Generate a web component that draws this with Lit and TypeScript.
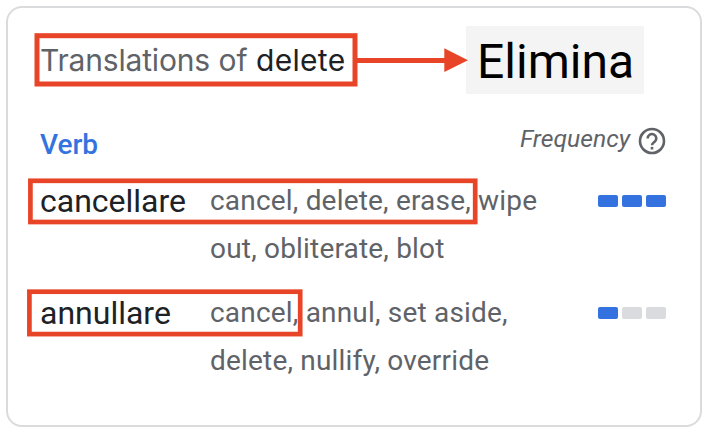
import { LitElement, html, css } from "lit";
import { customElement, property } from "lit/decorators.js";

@customElement("frequency-meter")
class FrequencyMeter extends LitElement {
  @property({ type: Number }) level = 0;
  static styles = css`
    :host { display: flex; gap: 4px; }
    .bar { width: 20px; height: 12px; border-radius: 2px; background: #dadbdf; }
    .on { background: #3473df; }
  `;
  render() {
    return html`${[1, 2, 3].map((n) => html`<span class="bar ${n <= this.level ? "on" : ""}"></span>`)}`;
  }
}

const entries = [
  { word: "cancellare", level: 3, lines: ["cancel, delete, erase, wipe", "out, obliterate, blot"] },
  { word: "annullare", level: 1, lines: ["cancel, annul, set aside,", "delete, nullify, override"] },
];

@customElement("app-root")
class AppRoot extends LitElement {
  static styles = css`
    :host {
      display: block; position: relative; box-sizing: border-box;
      width: 708px; height: 438px; padding: 6px; overflow: hidden;
      background: #fff; color: #5f6368;
      font-family: Roboto, sans-serif;
    }
    .card {
      box-sizing: border-box; width: 696px; height: 421px;
      border: 2px solid #dadbdd; border-radius: 16px;
      padding: 18px 34px 0 32px;
    }
    .head { display: flex; justify-content: space-between; height: 68px; }
    .title {
      margin: 0; font: 400 30px/68px Inter, sans-serif;
      letter-spacing: -0.18px; word-spacing: 0.4px; white-space: pre;
    }
    .title b { font-weight: 400; color: #202124; letter-spacing: 0.3px; }
    .result {
      box-sizing: border-box; width: 178px; height: 68px; margin-right: 22px;
      padding-left: 11px; background: #f4f4f4; color: #000;
      font-size: 48px; line-height: 71px; letter-spacing: 0;
    }
    .sub { display: flex; justify-content: space-between; height: 56px; margin-top: 21px; }
    .pos { margin-top: 6px; font-size: 28px; font-weight: 500; line-height: 48px; color: #3473df; }
    .freq { display: flex; align-items: flex-start; font-size: 24.7px; font-style: italic; line-height: 48px; gap: 8px; }
    .freq svg { margin-top: 12px; }
    .rows { display: grid; row-gap: 16px; margin-top: 5px; }
    .row { display: grid; grid-template-columns: 170px 1fr auto; height: 96px; }
    .word { font-size: 32px; line-height: 50px; color: #202124; }
    .means { margin-top: 1px; font-size: 28px; line-height: 48px; white-space: nowrap; letter-spacing: 0.19px; }
    frequency-meter { margin-top: 19px; }
    .marks { position: absolute; left: 0; top: 0; }
  `;
  render() {
    return html`
      <section class="card">
        <header class="head">
          <h1 class="title">Translations of <b>delete</b></h1>
          <div class="result">Elimina</div>
        </header>
        <div class="sub">
          <span class="pos">Verb</span>
          <span class="freq">Frequency
            <svg width="28" height="28" viewBox="0 0 28 28" fill="none" stroke="#5f6368" stroke-width="2.6">
              <circle cx="14" cy="14" r="12"></circle>
              <path d="M9.7 11.4a4.3 4.3 0 1 1 7.2 3.1c-1.7 1.4-2.9 1.9-2.9 3.7"></path>
              <path d="M14 19.9v2.6"></path>
            </svg>
          </span>
        </div>
        <div class="rows">
          ${entries.map((e) => html`
            <div class="row">
              <span class="word">${e.word}</span>
              <div class="means">${e.lines.map((l) => html`<div>${l}</div>`)}</div>
              <frequency-meter .level=${e.level}></frequency-meter>
            </div>`)}
        </div>
      </section>
      <svg class="marks" width="708" height="438" fill="none" stroke="#e84427" stroke-width="5">
        <rect x="37" y="35.7" width="318" height="48.3"></rect>
        <rect x="30.4" y="180.8" width="444.8" height="41.2" stroke-width="4.7"></rect>
        <rect x="29.4" y="291.7" width="270.8" height="42.4" stroke-width="4.7"></rect>
        <path d="M357 60.5H446"></path>
        <path d="M444.3 48.2L468 60.2L444.3 72Z" fill="#e84427" stroke="none"></path>
      </svg>
    `;
  }
}
